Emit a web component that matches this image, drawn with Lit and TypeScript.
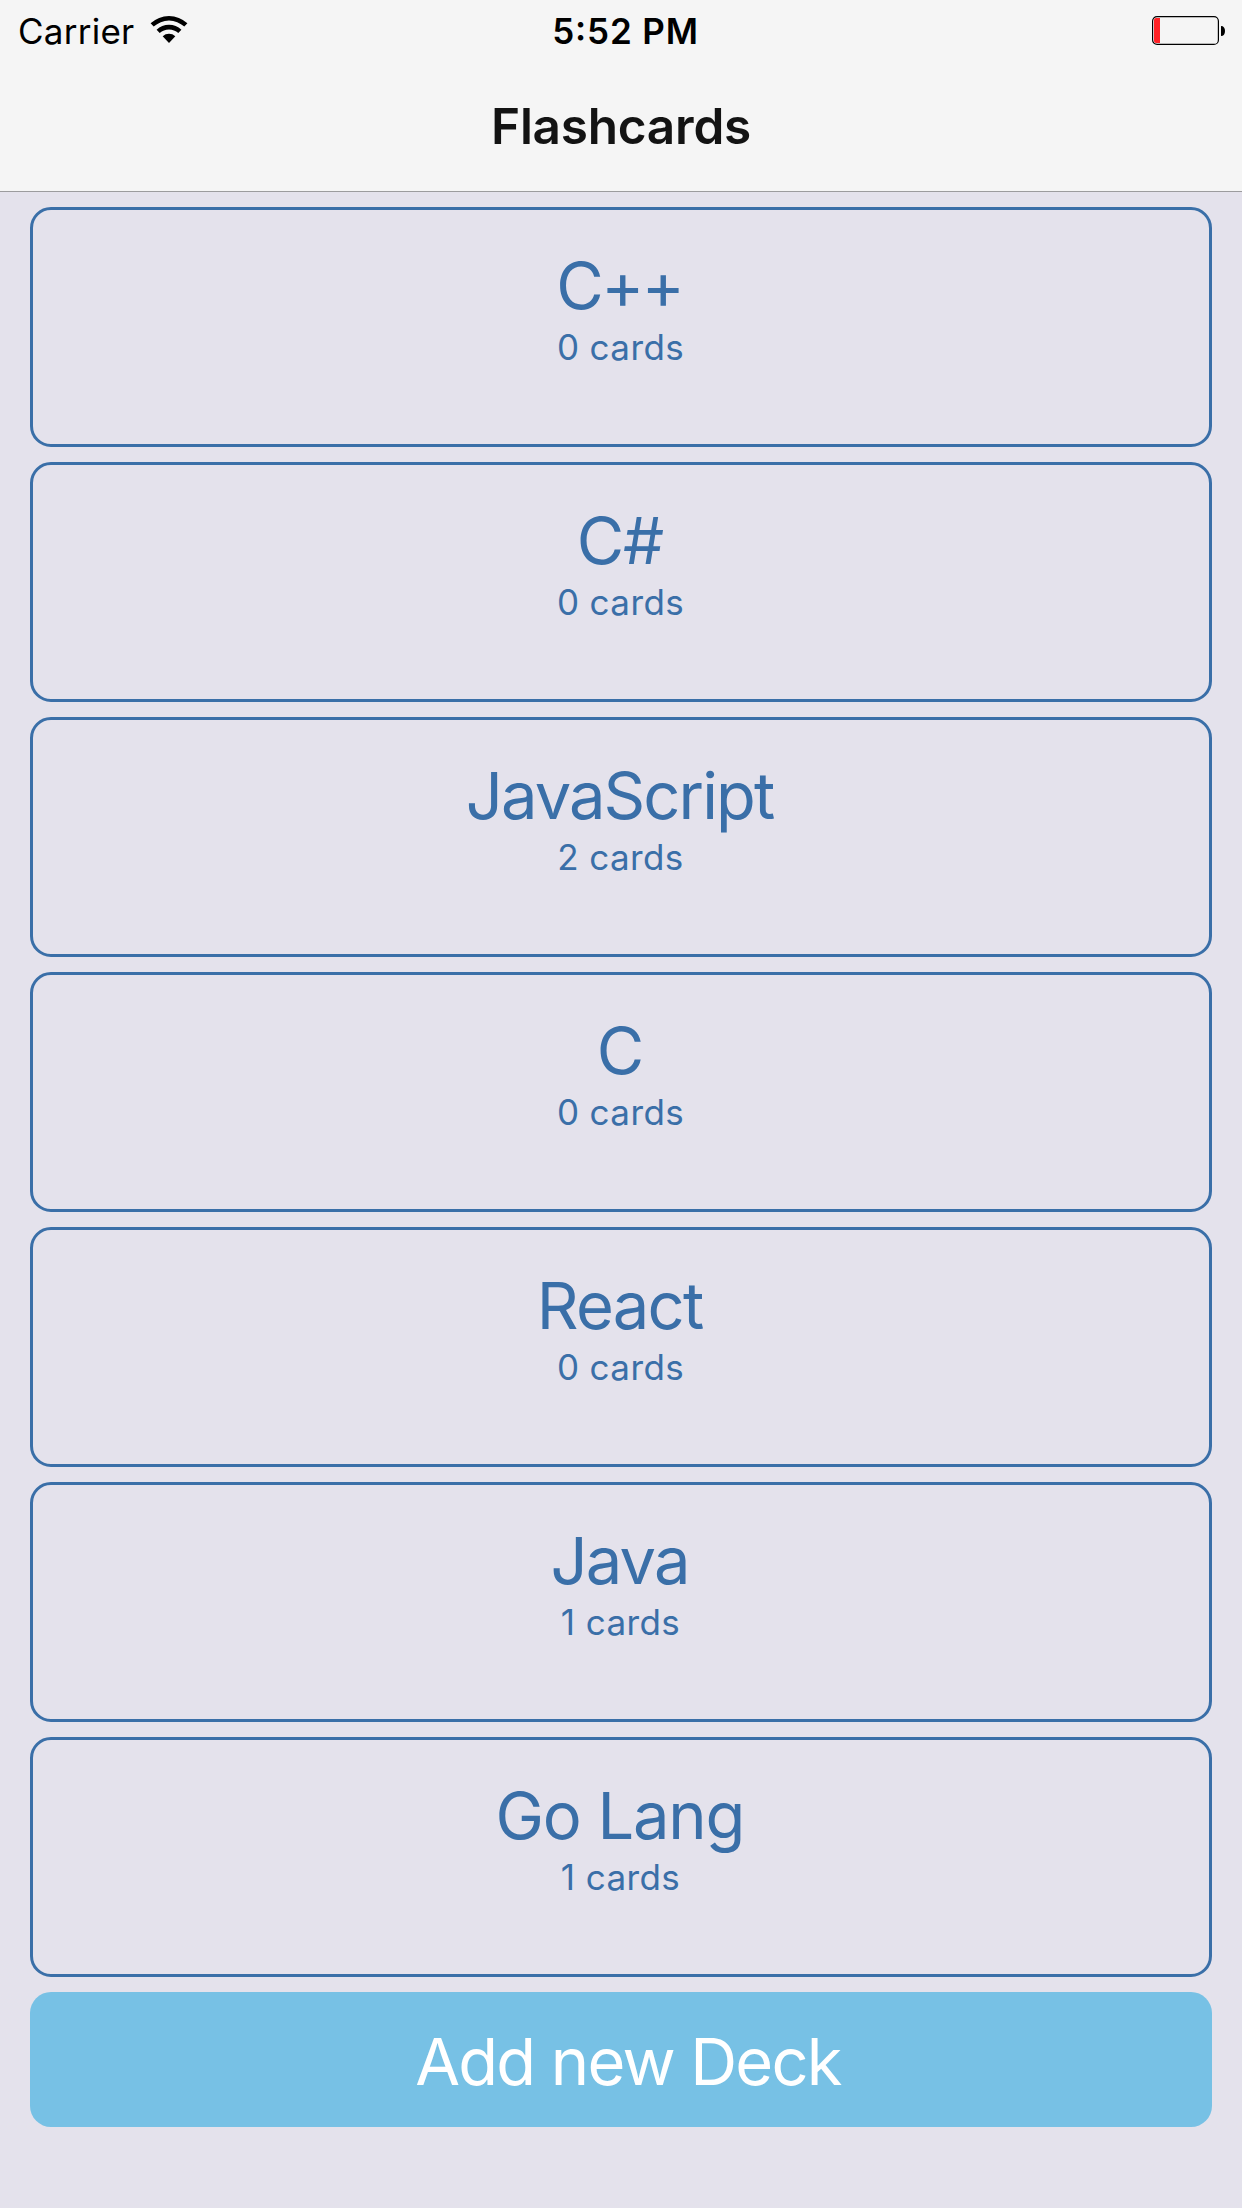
import { LitElement, html, css } from "lit";
import { customElement, property } from "lit/decorators.js";

interface Deck {
  title: string;
  count: number;
  /** Letter spacing of the title, in pixels. */
  tracking: number;
}

const DECKS: Deck[] = [
  { title: "C++", count: 0, tracking: -2.4 },
  { title: "C#", count: 0, tracking: -1.3 },
  { title: "JavaScript", count: 2, tracking: -1.9 },
  { title: "C", count: 0, tracking: 0 },
  { title: "React", count: 0, tracking: -1.7 },
  { title: "Java", count: 1, tracking: -1.8 },
  { title: "Go Lang", count: 1, tracking: -1.25 },
];

@customElement("status-bar")
export class StatusBar extends LitElement {
  static styles = css`
    :host {
      display: grid;
      grid-template-columns: 1fr auto 1fr;
      height: 60px;
      font-size: 35px;
      line-height: 60px;
      color: #000;
    }
    .carrier {
      display: flex;
      padding: 1px 0 0 18px;
      letter-spacing: 0.25px;
    }
    .wifi {
      margin: 14px 0 0 14.5px;
      width: 40px;
      height: 30px;
    }
    .time {
      padding: 1px 0 0 9px;
      font-weight: 600;
      letter-spacing: 0.85px;
      font-feature-settings: "calt" 1;
    }
    .power {
      display: flex;
      justify-content: flex-end;
      padding: 16px 17px 0 0;
    }
    .battery {
      width: 73px;
      height: 29px;
    }
  `;

  render() {
    return html`
      <div class="carrier">
        <span>Carrier</span>
        <svg class="wifi" viewBox="-20 -28 40 30">
          <path d="M-18.4-19.7A27 27 0 0 1 18.4-19.7L15.3-16.4A22.5 22.5 0 0 0-15.3-16.4Z" />
          <path d="M-12.4-13.3A18.2 18.2 0 0 1 12.4-13.3L9.3-9.9A13.6 13.6 0 0 0-9.3-9.9Z" />
          <path d="M-6.3-6.8A9.3 9.3 0 0 1 6.3-6.8L0 0Z" />
        </svg>
      </div>
      <div class="time">5:52 PM</div>
      <div class="power">
        <svg class="battery" viewBox="0 0 73 29">
          <rect x="0.6" y="0.6" width="65.8" height="27.8" rx="4.5" fill="none" stroke="#000" stroke-width="1.2" />
          <path d="M8 2H4A2 2 0 0 0 2 4V25A2 2 0 0 0 4 27H8Z" fill="#ff2226" />
          <path d="M69 10C71.6 10 73 12 73 15S71.6 20 69 20Z" />
        </svg>
      </div>
    `;
  }
}

@customElement("deck-card")
export class DeckCard extends LitElement {
  @property({ attribute: false }) deck!: Deck;

  static styles = css`
    :host {
      display: block;
      box-sizing: border-box;
      height: 240px;
      padding-top: 36px;
      border: 3px solid #3a6fa8;
      border-radius: 21px;
      color: #3a6fa8;
      text-align: center;
    }
    .title {
      padding-right: 1px;
      font-size: 65px;
      line-height: 79px;
    }
    .count {
      padding-right: 1px;
      font-size: 35px;
      line-height: 45px;
      letter-spacing: 0.4px;
    }
  `;

  render() {
    const { title, count, tracking } = this.deck;
    return html`
      <div class="title" style="letter-spacing:${tracking}px;text-indent:${tracking}px">${title}</div>
      <div class="count">${count} cards</div>
    `;
  }
}

@customElement("app-root")
export class AppRoot extends LitElement {
  static styles = css`
    :host {
      display: flex;
      flex-direction: column;
      box-sizing: border-box;
      height: 2208px;
      background: #e4e2ec;
      font-family: Inter, "Liberation Sans", sans-serif;
    }
    .header {
      box-sizing: border-box;
      height: 192px;
      background: #f5f5f5;
      border-bottom: 1px solid #9c9c9e;
    }
    .heading {
      margin: 0;
      font-size: 49.5px;
      font-weight: 600;
      line-height: 132px;
      letter-spacing: -0.24px;
      text-align: center;
      color: #131313;
    }
    .decks {
      display: flex;
      flex-direction: column;
      gap: 15px;
      padding: 15px 30px 0;
    }
    .add {
      box-sizing: border-box;
      height: 135px;
      padding: 30px 0 26px 14px;
      border: 0;
      border-radius: 21px;
      background: #77c1e5;
      color: #fff;
      font-family: inherit;
      font-size: 65px;
      line-height: 79px;
      letter-spacing: -1.8px;
      text-align: center;
    }
  `;

  render() {
    return html`
      <header class="header">
        <status-bar></status-bar>
        <h1 class="heading">Flashcards</h1>
      </header>
      <main class="decks">
        ${DECKS.map((deck) => html`<deck-card .deck=${deck}></deck-card>`)}
        <button class="add">Add new Deck</button>
      </main>
    `;
  }
}
